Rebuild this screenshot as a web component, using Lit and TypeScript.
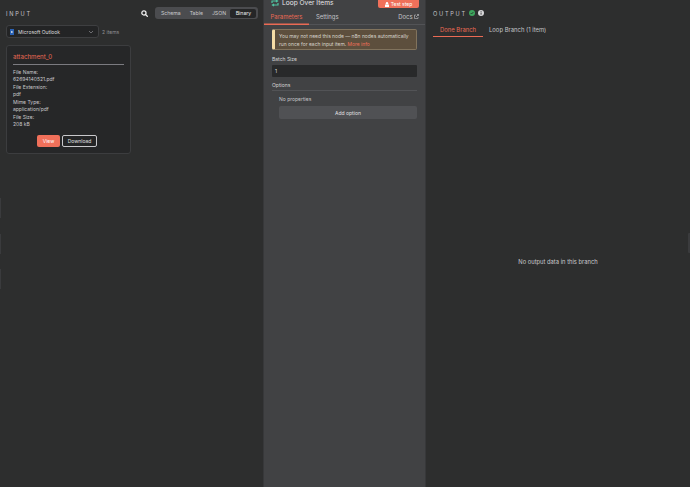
import { LitElement, html, css } from "lit";
import { customElement } from "lit/decorators.js";

@customElement("app-root")
export class AppRoot extends LitElement {
  static styles = css`
    :host { display: block; width: 690px; height: 487px; overflow: hidden; font-family: Inter, "Liberation Sans", sans-serif; color: #d4d4d8; background: #2d2e2e; }
    * { box-sizing: border-box; }
    .app { display: grid; grid-template-columns: 263px 163px 1fr; height: 487px; position: relative; }
    .input { padding: 7px 6px 0 6px; }
    .phead { display: flex; align-items: center; height: 12px; }
    .ilabel { font-size: 5.6px; letter-spacing: 1.75px; color: #c4c4c8; padding-top: 1px; }
    .search { margin-left: auto; margin-right: 7px; display: flex; }
    .seg { display: flex; align-items: center; background: #4b4c4f; border-radius: 3px; padding: 1.5px; height: 12px; width: 103px; font-size: 5.2px; color: #c9c9cc; margin-right: -1px; }
    .seg span { flex: 1 1 auto; text-align: center; }
    .seg .on { background: #252627; color: #efefef; border-radius: 2px; height: 9px; line-height: 9px; flex: 0 0 26px; }
    .srcrow { display: flex; align-items: center; gap: 3px; margin-top: 6px; }
    .select { width: 93px; height: 13px; background: #232425; border: 1px solid #3e3f41; border-radius: 3px; display: flex; align-items: center; padding: 0 4px 0 3px; font-size: 5px; color: #dedede; gap: 2px; }
    .select svg:last-child { margin-left: auto; }
    .items { font-size: 5px; color: #8f8f93; }
    .card { width: 125px; height: 109px; margin-top: 7px; background: #262728; border: 1px solid #3c3d3f; border-radius: 3px; padding: 6px 6px 0 6px; }
    .att { font-size: 6.2px; color: #ea6a54; height: 10px; line-height: 10px; }
    .rule { height: 1px; background: #7b7b80; margin-top: 2px; margin-bottom: 4px; }
    .meta { font-size: 5px; line-height: 7.45px; color: #c8c8cb; height: 60px; }
    .btns { display: flex; justify-content: center; gap: 2px; margin-top: 6px; margin-left: -3px; }
    .btn { height: 12px; display: flex; align-items: center; justify-content: center; font-size: 5px; border-radius: 2px; }
    .view { width: 23px; background: #f0705a; color: #fff; }
    .dl { width: 35px; background: #242526; border: 1px solid #c8c8cb; color: #e2e2e4; }
    .mid { background: #414244; border-left: 1px solid #37383a; border-right: 1px solid #37383a; display: flex; flex-direction: column; }
    .top { display: flex; align-items: center; height: 8px; padding: 0 6px 0 7px; }
    .title { font-size: 6.6px; line-height: 8px; color: #e8e8ea; margin-left: 3px; margin-top: -3px; white-space: nowrap; }
    .test { margin-left: auto; width: 41px; height: 8px; background: #f0705a; border-radius: 0 0 2px 2px; color: #fff; font-size: 5px; display: flex; align-items: center; justify-content: center; gap: 2px; }
    .tabs { display: flex; align-items: center; height: 17px; font-size: 5.9px; padding: 0 6px 0 0; border-bottom: 1px solid #525356; color: #c4c4c8; }
    .tab { height: 17px; display: flex; align-items: center; padding-top: 1px; }
    .tab.on { width: 45px; justify-content: center; color: #ea6a54; border-bottom: 1px solid #ea6a54; box-shadow: inset 0 -0.5px 0 #ea6a54; }
    .tab.s { margin-left: 7px; }
    .docs { margin-left: auto; display: flex; align-items: center; gap: 1.5px; padding-top: 1px; }
    .body { padding: 4px 8px 0 8px; display: flex; flex-direction: column; }
    .note { height: 21px; background: #5d4f3d; border: 1px solid #81735d; border-left: 3px solid #f5dca5; border-radius: 2px; padding: 2px 0 0 4px; font-size: 4.95px; line-height: 8px; color: #d8d5cd; white-space: nowrap; }
    .note b { color: #f0705a; font-weight: 400; }
    .lbl { font-size: 5px; line-height: 6px; color: #d4d4d6; }
    .bs { margin-top: 6px; }
    .inp { margin-top: 3px; height: 12px; background: #28292a; border-radius: 1px; font-size: 5px; padding: 0 3px; display: flex; align-items: center; color: #dcdcdc; }
    .opt { margin-top: 5px; padding-bottom: 2px; border-bottom: 1px solid #525356; }
    .np { font-size: 5px; line-height: 6px; color: #c4c4c8; margin: 5px 0 0 7px; }
    .add { margin: 4px 0 0 7px; height: 13px; background: #505154; border-radius: 2px; font-size: 5px; color: #e0e0e2; display: flex; align-items: center; justify-content: center; }
    .output { padding: 7px 7px 0 7px; display: flex; flex-direction: column; }
    .ohead { display: flex; align-items: center; height: 12px; gap: 3px; }
    .otabs { display: flex; gap: 6px; font-size: 5.9px; height: 13px; margin-top: 5px; color: #c4c4c8; }
    .otab { height: 13px; line-height: 11px; }
    .otab.on { width: 50px; text-align: center; color: #ea6a54; border-bottom: 1px solid #ea6a54; }
    .empty { flex: 1; display: flex; align-items: center; justify-content: center; font-size: 5.8px; color: #c8c8cb; padding-bottom: 2px; }
    .handle { position: absolute; height: 20px; background: #3a3b3d; }
    .hl { left: 0; width: 1px; }
    .hr { right: 0; width: 2px; border-radius: 1px 0 0 1px; }
  `;

  render() {
    return html`<div class="app">
      <section class="input">
        <div class="phead">
          <span class="ilabel">INPUT</span>
          <span class="search"><svg width="7" height="7" viewBox="0 0 12 12" fill="none" stroke="#f0f0f0" stroke-width="2.2"><circle cx="5" cy="5" r="3.6"/><path d="M8 8l3.5 3.5"/></svg></span>
          <div class="seg"><span>Schema</span><span>Table</span><span>JSON</span><span class="on">Binary</span></div>
        </div>
        <div class="srcrow">
          <div class="select">
            <svg width="4" height="6" viewBox="0 0 4 6"><rect width="4" height="6" fill="#2a62b5"/><rect x="1" y="2" width="1.6" height="2" fill="#bcd"/></svg>
            <span style="margin-left:2px">Microsoft Outlook</span>
            <svg width="6" height="4" viewBox="0 0 6 4" fill="none" stroke="#8e8e92" stroke-width=".7"><path d="M1 1l2 2 2-2"/></svg>
          </div>
          <span class="items">2 items</span>
        </div>
        <div class="card">
          <div class="att">attachment_0</div>
          <div class="rule"></div>
          <div class="meta">File Name:<br />62694140521.pdf<br />File Extension:<br />pdf<br />Mime Type:<br />application/pdf<br />File Size:<br />208 kB</div>
          <div class="btns"><div class="btn view">View</div><div class="btn dl">Download</div></div>
        </div>
      </section>
      <section class="mid">
        <div class="top">
          <svg width="8" height="8" viewBox="0 0 8 8" fill="none" stroke="#4fc3a1" stroke-width="1.2" style="margin-top:-3px"><path d="M1 4V2h5M5 1l1.5 1L5 3M7 4v2H2M3 5L1.5 6 3 7"/></svg>
          <span class="title">Loop Over Items</span>
          <div class="test"><svg width="4" height="5" viewBox="0 0 4 5" fill="#fff"><circle cx="2" cy="1.2" r="1.2"/><rect y="2.5" width="4" height="2.5"/></svg>Test step</div>
        </div>
        <div class="tabs">
          <div class="tab on">Parameters</div>
          <div class="tab s">Settings</div>
          <div class="docs">Docs <svg width="5" height="5" viewBox="0 0 5 5" fill="none" stroke="#c4c4c8" stroke-width=".6"><path d="M2 1H.5v3.5H4V3M2 3l2.5-2.5M3 .5h1.5V2"/></svg></div>
        </div>
        <div class="body">
          <div class="note">You may not need this node — n8n nodes automatically<br />run once for each input item. <b>More info</b></div>
          <div class="lbl bs">Batch Size</div>
          <div class="inp">1</div>
          <div class="lbl opt">Options</div>
          <div class="np">No properties</div>
          <div class="add">Add option</div>
        </div>
      </section>
      <section class="output">
        <div class="ohead">
          <span class="ilabel" style="margin-right:-1px">OUTPUT</span>
          <svg width="6" height="6" viewBox="0 0 6 6"><circle cx="3" cy="3" r="3" fill="#3da55d"/><path d="M1.6 3l1 1 1.8-2" fill="none" stroke="#222" stroke-width=".7"/></svg>
          <svg width="6" height="6" viewBox="0 0 6 6"><circle cx="3" cy="3" r="3" fill="#d8d8da"/><rect x="2.6" y="2.5" width=".9" height="2.2" fill="#333"/><rect x="2.6" y="1.2" width=".9" height=".8" fill="#333"/></svg>
        </div>
        <div class="otabs"><div class="otab on">Done Branch</div><div class="otab">Loop Branch (1 item)</div></div>
        <div class="empty">No output data in this branch</div>
      </section>
      <div class="handle hl" style="top:198px"></div>
      <div class="handle hl" style="top:234px"></div>
      <div class="handle hl" style="top:269px"></div>
      <div class="handle hr" style="top:233px"></div>
    </div>`;
  }
}
